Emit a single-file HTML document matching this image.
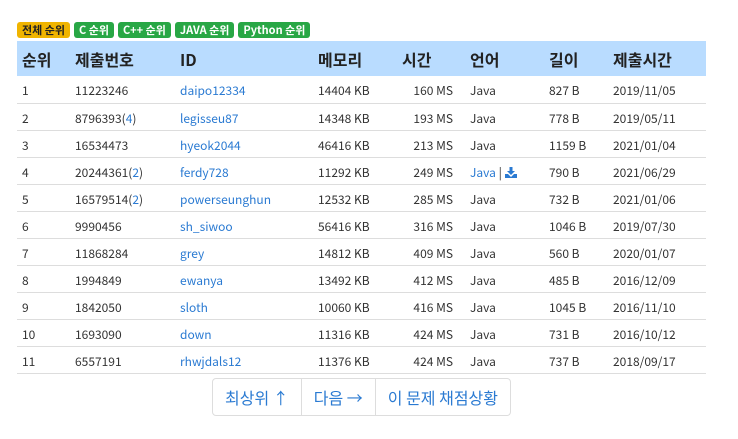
<!DOCTYPE html>
<html><head><meta charset="utf-8"><style>
body{margin:0;background:#fff;font-family:"Noto Sans CJK KR","Liberation Sans",sans-serif;width:738px;height:439px;overflow:hidden;position:relative}
.badges{position:absolute;left:17px;top:22px;display:flex;gap:4px}
.b{font-size:11px;font-weight:bold;color:#fff;background:#28a745;border-radius:3px;height:16px;line-height:16px;padding:0 5px}
.b.y{background:#f0b400;color:#222}
table{position:absolute;left:17px;top:41px;width:689px;border-collapse:collapse;font-size:12px;color:#333}
th{background:#b9dcff;text-align:left;font-size:16px;font-weight:bold;height:35px;padding:0 0 0 5px;color:#222;line-height:20px}
td{height:27px;border-bottom:1px solid #ddd;padding:4px 0 0 5px;box-sizing:border-box;line-height:16px}
a{color:#2a7ad2;text-decoration:none}
.r{text-align:right;padding-right:12px}
.pg{position:absolute;left:212px;top:378px;height:36px;display:flex;border:1px solid #ddd;border-radius:4px;font-size:16px;color:#2a7ad2}
.pg div{padding:0 12px;line-height:36px;border-left:1px solid #ddd}
.pg div:first-child{border-left:none}
</style></head><body>
<div class="badges"><span class="b y">전체 순위</span><span class="b">C 순위</span><span class="b">C++ 순위</span><span class="b">JAVA 순위</span><span class="b">Python 순위</span></div>
<table>
<colgroup><col style="width:53px"><col style="width:105px"><col style="width:138px"><col style="width:82px"><col style="width:70px"><col style="width:79px"><col style="width:64px"><col></colgroup>
<tr><th>순위</th><th>제출번호</th><th>ID</th><th>메모리</th><th style="padding-left:7px">시간</th><th>언어</th><th>길이</th><th>제출시간</th></tr>
<tr><td>1</td><td>11223246</td><td><a>daipo12334</a></td><td>14404 KB</td><td class="r">160 MS</td><td>Java</td><td>827 B</td><td>2019/11/05</td></tr>
<tr><td>2</td><td>8796393(<a>4</a>)</td><td><a>legisseu87</a></td><td>14348 KB</td><td class="r">193 MS</td><td>Java</td><td>778 B</td><td>2019/05/11</td></tr>
<tr><td>3</td><td>16534473</td><td><a>hyeok2044</a></td><td>46416 KB</td><td class="r">213 MS</td><td>Java</td><td>1159 B</td><td>2021/01/04</td></tr>
<tr><td>4</td><td>20244361(<a>2</a>)</td><td><a>ferdy728</a></td><td>11292 KB</td><td class="r">249 MS</td><td><a>Java</a> | <svg width="12" height="11" viewBox="0 0 12 11" style="vertical-align:-1px"><path d="M4.5 0h3v4h2.5L6 8 2 4h2.5z M0 7h3l3 3 3-3h3v4H0z" fill="#2a7ad2"/></svg></td><td>790 B</td><td>2021/06/29</td></tr>
<tr><td>5</td><td>16579514(<a>2</a>)</td><td><a>powerseunghun</a></td><td>12532 KB</td><td class="r">285 MS</td><td>Java</td><td>732 B</td><td>2021/01/06</td></tr>
<tr><td>6</td><td>9990456</td><td><a>sh_siwoo</a></td><td>56416 KB</td><td class="r">316 MS</td><td>Java</td><td>1046 B</td><td>2019/07/30</td></tr>
<tr><td>7</td><td>11868284</td><td><a>grey</a></td><td>14812 KB</td><td class="r">409 MS</td><td>Java</td><td>560 B</td><td>2020/01/07</td></tr>
<tr><td>8</td><td>1994849</td><td><a>ewanya</a></td><td>13492 KB</td><td class="r">412 MS</td><td>Java</td><td>485 B</td><td>2016/12/09</td></tr>
<tr><td>9</td><td>1842050</td><td><a>sloth</a></td><td>10060 KB</td><td class="r">416 MS</td><td>Java</td><td>1045 B</td><td>2016/11/10</td></tr>
<tr><td>10</td><td>1693090</td><td><a>down</a></td><td>11316 KB</td><td class="r">424 MS</td><td>Java</td><td>731 B</td><td>2016/10/12</td></tr>
<tr><td>11</td><td>6557191</td><td><a>rhwjdals12</a></td><td>11376 KB</td><td class="r">424 MS</td><td>Java</td><td>737 B</td><td>2018/09/17</td></tr>
</table>
<div class="pg"><div>최상위 ↑</div><div>다음 →</div><div>이 문제 채점상황</div></div>
</body></html>
